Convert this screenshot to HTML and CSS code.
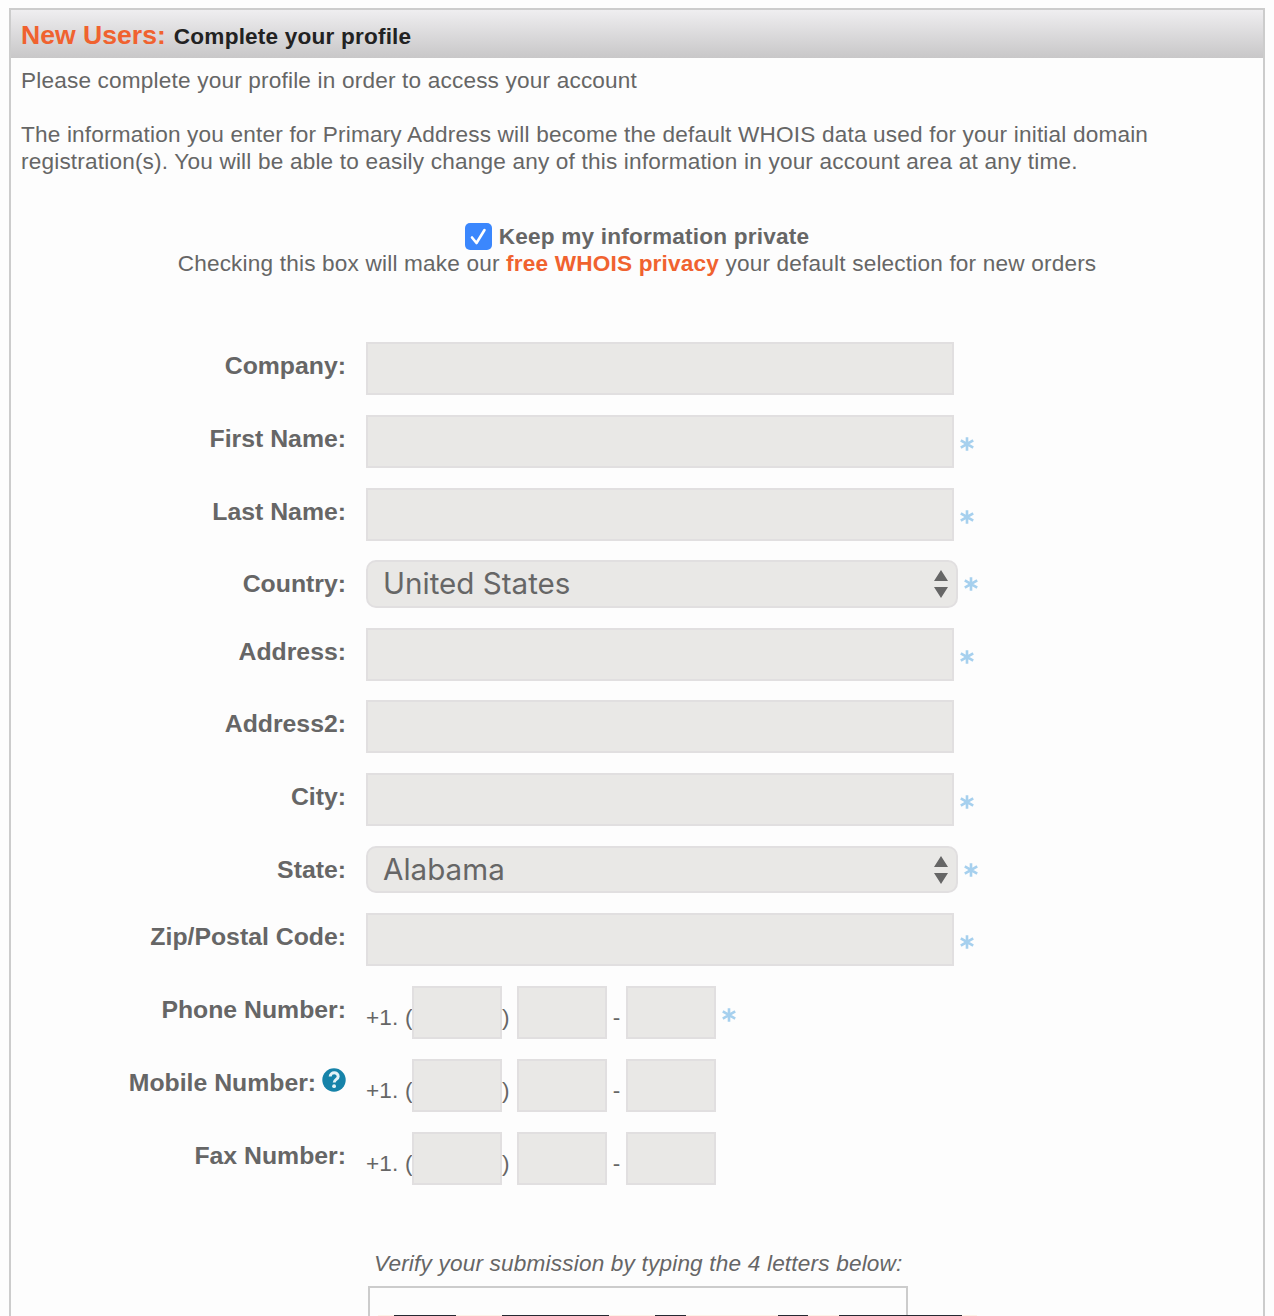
FILE: index.html
```html
<!DOCTYPE html>
<html lang="en">
<head>
<meta charset="utf-8">
<title>Complete your profile</title>
<link rel="stylesheet" href="styles.css">
</head>
<body>
<svg class="defs" aria-hidden="true">
  <symbol id="star" viewBox="0 0 14 14"><path d="M7 .3v13.4M.8 3.3l12.4 7.4M13.2 3.3L.8 10.7" fill="none" stroke="#a6d0ee" stroke-width="2.6"/></symbol>
  <symbol id="arrows" viewBox="0 0 14 28"><path d="M7 0l7 11H0zM0 17h14L7 28z" fill="#666"/></symbol>
</svg>
<main class="panel">
  <h1 class="panel-header"><span class="accent">New Users:</span><span class="title">Complete your profile</span></h1>
  <form class="content">
    <p class="intro">Please complete your profile in order to access your account</p>
    <p class="intro info">The information you enter for Primary Address will become the default WHOIS data used for your initial domain<br>registration(s). You will be able to easily change any of this information in your account area at any time.</p>
    <div class="privacy">
      <label class="privacy-check"><svg class="checkbox" viewBox="0 0 27 27"><rect width="27" height="27" rx="5" fill="#3b87fd"/><path d="M7 14.5l4.5 5.5L19.5 7" fill="none" stroke="#fff" stroke-width="2.6" stroke-linecap="round" stroke-linejoin="round"/></svg>Keep my information private</label>
      <p class="privacy-note">Checking this box will make our <b class="accent">free WHOIS privacy</b> your default selection for new orders</p>
    </div>
    <div class="fields">
      <div class="row"><label class="label" for="company">Company:</label><input class="text" id="company"></div>
      <div class="row"><label class="label" for="first">First Name:</label><input class="text" id="first"><svg class="star"><use href="#star"/></svg></div>
      <div class="row"><label class="label" for="last">Last Name:</label><input class="text" id="last"><svg class="star"><use href="#star"/></svg></div>
      <div class="row select-row"><label class="label" for="country">Country:</label><div class="select-box"><select class="select" id="country"><option>United States</option></select><svg class="arrows"><use href="#arrows"/></svg></div><svg class="star"><use href="#star"/></svg></div>
      <div class="row"><label class="label" for="address">Address:</label><input class="text" id="address"><svg class="star"><use href="#star"/></svg></div>
      <div class="row"><label class="label" for="address2">Address2:</label><input class="text" id="address2"></div>
      <div class="row"><label class="label" for="city">City:</label><input class="text" id="city"><svg class="star"><use href="#star"/></svg></div>
      <div class="row select-row"><label class="label" for="state">State:</label><div class="select-box"><select class="select" id="state"><option>Alabama</option></select><svg class="arrows"><use href="#arrows"/></svg></div><svg class="star"><use href="#star"/></svg></div>
      <div class="row"><label class="label" for="zip">Zip/Postal Code:</label><input class="text" id="zip"><svg class="star"><use href="#star"/></svg></div>
      <div class="row"><span class="label">Phone Number:</span><span class="prefix">+1. (</span><input class="text part"><span class="close">)</span><input class="text part"><span class="dash">-</span><input class="text part"><svg class="star"><use href="#star"/></svg></div>
      <div class="row"><span class="label">Mobile Number: <svg class="help" viewBox="0 0 24 24"><circle cx="12" cy="12" r="11.7" fill="#1683a9"/><path d="M8.2 8.6c0-5 8-4.9 8-.2 0 3.2-4 2.8-4 6.2" fill="none" stroke="#e4f3f7" stroke-width="3"/><circle cx="12.1" cy="18.2" r="1.9" fill="#e4f3f7"/></svg></span><span class="prefix">+1. (</span><input class="text part"><span class="close">)</span><input class="text part"><span class="dash">-</span><input class="text part"></div>
      <div class="row"><span class="label">Fax Number:</span><span class="prefix">+1. (</span><input class="text part"><span class="close">)</span><input class="text part"><span class="dash">-</span><input class="text part"></div>
    </div>
    <p class="verify">Verify your submission by typing the 4 letters below:</p>
    <div class="captcha"><div class="captcha-code"></div></div>
  </form>
</main>
</body>
</html>
```

FILE: styles.css
```css
* { box-sizing: border-box; }

body {
  margin: 0;
  height: 1316px;
  overflow: hidden;
  padding: 8px 9px 0;
  background: #fdfdfd;
  color: #666;
  font: 22.6px/27px "Liberation Sans", Arial, sans-serif;
  letter-spacing: .179px;
}

p { margin: 0; }
.defs { position: absolute; width: 0; height: 0; }
.accent { color: #f0622f; }

.panel {
  width: 1256px;
  height: 1308px;
  border: 2px solid #ccc;
  border-bottom: 0;
}

.panel-header {
  display: flex;
  align-items: baseline;
  gap: 8px;
  margin: 0;
  height: 48px;
  padding-left: 10px;
  background: linear-gradient(#efeef0, #c8c7c8);
  color: #222;
  font-size: 22.6px;
  line-height: 51px;
  letter-spacing: .19px;
  white-space: nowrap;
}
.panel-header .accent { font-size: 26.6px; letter-spacing: 0; }

.content { padding-top: 9px; }
.intro { padding-left: 10px; white-space: nowrap; }
.info { margin-top: 27px; }

.privacy { margin-top: 48px; text-align: center; white-space: nowrap; }
.privacy-check {
  display: flex;
  justify-content: center;
  align-items: center;
  gap: 7px;
  height: 27px;
  font-weight: bold;
  letter-spacing: .2px;
}
.checkbox { width: 27px; height: 27px; }

.fields {
  display: flex;
  flex-direction: column;
  gap: 19.8px;
  margin-top: 65px;
}
.row { display: flex; height: 53px; }
.select-row { height: 47.4px; }
.label {
  width: 335px;
  margin-right: 20px;
  text-align: right;
  font-size: 24.8px;
  font-weight: bold;
  letter-spacing: 0;
  line-height: 48px;
  white-space: nowrap;
}
.text {
  width: 588px;
  height: 53px;
  padding: 0 10px;
  border: 2px solid #e1dfe0;
  border-radius: 0;
  background: #e9e8e6;
  color: #666;
  font: inherit;
}
.part { width: 90px; }
.star { width: 14px; height: 14px; margin: 22px 0 0 6px; }
.select-row .star { margin-top: 17px; }

.select-box { display: grid; width: 592px; height: 47.4px; }
.select {
  grid-area: 1 / 1;
  appearance: none;
  padding: 0 15px 2px;
  border: 2px solid #e1dfe0;
  border-radius: 10px;
  background: #e9e8e6;
  color: #666;
  font: 29.6px Inter, sans-serif;
}
.arrows {
  grid-area: 1 / 1;
  place-self: center end;
  width: 14px;
  height: 28px;
  margin-right: 10px;
  pointer-events: none;
}

.prefix, .close, .dash { line-height: 64px; white-space: nowrap; }
.prefix { width: 46px; }
.close { width: 15px; }
.dash { width: 19px; text-align: center; }
.help { width: 24px; height: 24px; margin-left: -1px; vertical-align: -1px; }

.verify {
  margin: 65px 0 0 363px;
  font-style: italic;
  white-space: nowrap;
}
.captcha {
  width: 540px;
  height: 30px;
  margin: 9px 0 0 357px;
  padding: 27px 0 0 8px;
  border: 2px solid #ccc;
  border-bottom: 0;
}
/* Captcha image, wider than its frame */
.captcha-code {
  width: 599px;
  height: 1px;
  background: linear-gradient(90deg,
    #fdf3e8 16px, #272932 16px 78px,
    #fdf3e8 78px 124px, #272932 124px 231px,
    #fdf3e8 231px 277px, #272932 277px 308px,
    #fdf3e8 308px 400px, #272932 400px 430px,
    #fdf3e8 430px 461px, #272932 461px 584px,
    #fdf3e8 584px);
}
```
